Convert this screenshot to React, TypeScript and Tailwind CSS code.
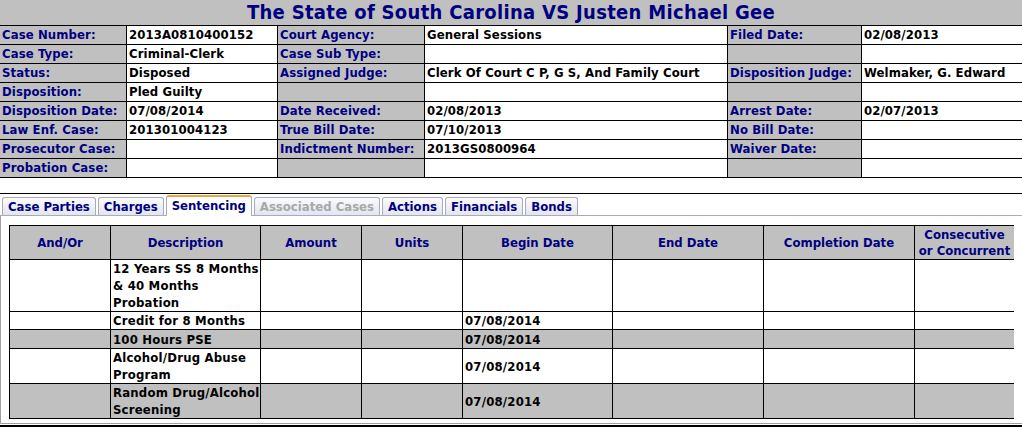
import React from "react";

const info: string[][] = [
  ["Case Number:", "2013A0810400152", "Court Agency:", "General Sessions", "Filed Date:", "02/08/2013"],
  ["Case Type:", "Criminal-Clerk", "Case Sub Type:", "", "", ""],
  ["Status:", "Disposed", "Assigned Judge:", "Clerk Of Court C P, G S, And Family Court", "Disposition Judge:", "Welmaker, G. Edward"],
  ["Disposition:", "Pled Guilty", "", "", "", ""],
  ["Disposition Date:", "07/08/2014", "Date Received:", "02/08/2013", "Arrest Date:", "02/07/2013"],
  ["Law Enf. Case:", "201301004123", "True Bill Date:", "07/10/2013", "No Bill Date:", ""],
  ["Prosecutor Case:", "", "Indictment Number:", "2013GS0800964", "Waiver Date:", ""],
  ["Probation Case:", "", "", "", "", ""],
];

const tabs = [
  { name: "Case Parties", state: "normal" },
  { name: "Charges", state: "normal" },
  { name: "Sentencing", state: "active" },
  { name: "Associated Cases", state: "disabled" },
  { name: "Actions", state: "normal" },
  { name: "Financials", state: "normal" },
  { name: "Bonds", state: "normal" },
];

const headers: React.ReactNode[] = [
  "And/Or",
  "Description",
  "Amount",
  "Units",
  "Begin Date",
  "End Date",
  "Completion Date",
  <>
    Consecutive
    <br />
    or Concurrent
  </>,
];

const rows: { desc: React.ReactNode; date: string; gray: boolean }[] = [
  {
    desc: (
      <>
        12 Years SS 8 Months
        <br />& 40 Months
        <br />
        Probation
      </>
    ),
    date: "",
    gray: false,
  },
  { desc: "Credit for 8 Months", date: "07/08/2014", gray: false },
  { desc: "100 Hours PSE", date: "07/08/2014", gray: true },
  {
    desc: (
      <>
        Alcohol/Drug Abuse
        <br />
        Program
      </>
    ),
    date: "07/08/2014",
    gray: false,
  },
  {
    desc: (
      <>
        Random Drug/Alcohol
        <br />
        Screening
      </>
    ),
    date: "07/08/2014",
    gray: true,
  },
];

export default function App() {
  return (
    <div className="w-[1022px] h-[432px] overflow-hidden bg-white font-['DejaVu_Sans_Condensed','DejaVu_Sans',sans-serif] font-bold">
      <div className="h-[25px] bg-[#c0c0c0] text-center text-[20px] leading-[25px] tracking-[0.3px] text-[#000080]">
        The State of South Carolina VS Justen Michael Gee
      </div>

      <div className="grid grid-cols-[126px_150px_146px_302px_133px_160px] gap-px border-y border-black bg-black text-[13px] leading-[18px] tracking-[0.1px]">
        {info.map((row, ri) =>
          row.map((cell, ci) => (
            <div
              key={`${ri}-${ci}`}
              className={
                ci % 2 === 0
                  ? "h-[18px] whitespace-nowrap overflow-hidden bg-[#c0c0c0] px-[2px] text-[#000080]"
                  : "h-[18px] whitespace-nowrap overflow-hidden bg-white px-[2px] text-black"
              }
            >
              {cell}
            </div>
          ))
        )}
      </div>

      <div className="h-[15px]" />
      <div className="h-px bg-black" />

      <div className="flex h-[22px] items-end gap-[2px] border-b border-[#a7abbe] pl-[2px] text-[13px]">
        {tabs.map((t) =>
          t.state === "active" ? (
            <div
              key={t.name}
              className="-mb-px h-[21px] rounded-t-[3px] border-x border-t-2 border-x-[#a7abbe] border-t-[#f0a43c] bg-white px-[5px] leading-[18px] text-[#000080]"
            >
              {t.name}
            </div>
          ) : (
            <div
              key={t.name}
              className={
                t.state === "disabled"
                  ? "h-[18px] rounded-t-[3px] border-x border-t border-[#a7abbe] bg-gradient-to-b from-[#fbfbfd] to-[#e3e6f0] px-[5px] leading-[17px] text-[#a8a8a8]"
                  : "h-[18px] rounded-t-[3px] border-x border-t border-[#a7abbe] bg-gradient-to-b from-[#fbfbfd] to-[#e3e6f0] px-[5px] leading-[17px] text-[#000080]"
              }
            >
              {t.name}
            </div>
          )
        )}
      </div>

      <div className="border-b border-l border-[#a0a0a0] px-[8px] pb-[4px] pt-[9px]">
        <div className="grid grid-cols-[100px_149px_100px_100px_149px_150px_150px_99px] grid-rows-[33px_51px_17px_18px_34px_34px] gap-px border border-black bg-black text-[13px]">
          {headers.map((h, i) => (
            <div
              key={i}
              className="flex items-center justify-center bg-[#c0c0c0] text-center leading-[16px] text-[#000080]"
            >
              {h}
            </div>
          ))}
          {rows.map((r, ri) => {
            const bg = r.gray ? "bg-[#c0c0c0]" : "bg-white";
            return (
              <React.Fragment key={ri}>
                <div className={bg} />
                <div className={`${bg} flex items-center whitespace-nowrap px-[2px] leading-[17px] tracking-[0.2px] text-black`}>
                  <div>{r.desc}</div>
                </div>
                <div className={bg} />
                <div className={bg} />
                <div className={`${bg} flex items-center px-[2px] leading-[17px] tracking-[0.2px] text-black`}>{r.date}</div>
                <div className={bg} />
                <div className={bg} />
                <div className={bg} />
              </React.Fragment>
            );
          })}
        </div>
      </div>
      <div className="mt-px h-[2px] bg-black" />
    </div>
  );
}
